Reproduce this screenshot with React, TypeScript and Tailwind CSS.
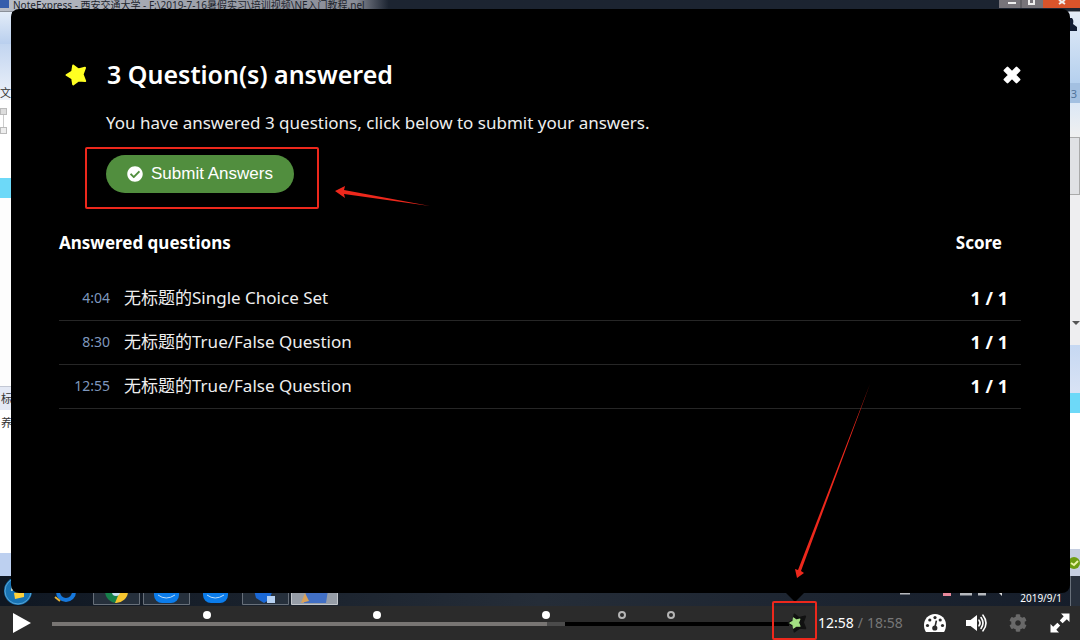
import { FaCheckCircle, FaCog } from 'react-icons/fa';

const DURATION = 1138;

const answers = [
  { time: '4:04', title: '无标题的Single Choice Set', score: '1 / 1' },
  { time: '8:30', title: '无标题的True/False Question', score: '1 / 1' },
  { time: '12:55', title: '无标题的True/False Question', score: '1 / 1' },
];

const markers = [
  { seconds: 244, answered: true },
  { seconds: 510, answered: true },
  { seconds: 775, answered: true },
  { seconds: 894, answered: false },
  { seconds: 972, answered: false },
];

function StarIcon({ className }: { className?: string }) {
  return (
    <svg viewBox="0 0 22 22" className={className} aria-hidden="true">
      <path
        d="M1.5 11 L7.2 7.6 L8.2 1.5 L13.2 5.4 L20 3.8 L17.6 10.4 L20.2 17 L13.6 16.4 L8.2 20.5 L7.2 14.4 Z"
        fill="currentColor"
        stroke="currentColor"
        strokeWidth="2"
        strokeLinejoin="round"
      />
    </svg>
  );
}

function GaugeIcon() {
  return (
    <svg viewBox="0 0 24 20" className="h-5 w-6" aria-hidden="true">
      <path fill="#fff" d="M12 1 C5.4 1 1 6 1 12 C1 14.6 1.6 16.6 2.6 18.4 Q3 19 3.8 19 H20.2 Q21 19 21.4 18.4 C22.4 16.6 23 14.6 23 12 C23 6 18.6 1 12 1 Z" />
      <g fill="#2b2b2b">
        <circle cx="4.5" cy="12.5" r="1.6" />
        <circle cx="6.8" cy="7" r="1.6" />
        <circle cx="12" cy="4.6" r="1.6" />
        <circle cx="17.2" cy="7" r="1.6" />
        <circle cx="19.5" cy="12.5" r="1.6" />
        <circle cx="11.8" cy="15" r="2.6" />
      </g>
      <path d="M12 14 L13.4 7.6" stroke="#2b2b2b" strokeWidth="1.6" />
    </svg>
  );
}

function VolumeIcon() {
  return (
    <svg viewBox="0 0 22 18" className="h-[18px] w-[22px]" aria-hidden="true">
      <path fill="#fff" d="M0 6 H4.5 L11 1 V17 L4.5 12 H0 Z" />
      <g fill="none" stroke="#fff" strokeWidth="1.6" strokeLinecap="round">
        <path d="M13 6.2 Q15.2 9 13 11.8" />
        <path d="M15 3.6 Q19 9 15 14.4" />
        <path d="M17 1.2 Q23 9 17 16.8" />
      </g>
    </svg>
  );
}

function ExpandIcon() {
  return (
    <svg viewBox="0 0 20 20" className="size-5" aria-hidden="true">
      <path fill="#fff" d="M11 0.5 H19.5 V9 L16.8 6.3 L12.6 10.2 L9.8 7.4 L13.7 3.2 Z" />
      <path fill="#fff" d="M9 19.5 H0.5 V11 L3.2 13.7 L7.4 9.8 L10.2 12.6 L6.3 16.8 Z" />
    </svg>
  );
}

// The recorded desktop that shows around the edges of the dialog
function Desktop() {
  return (
    <div className="flex h-full flex-col overflow-hidden text-[#333]" aria-hidden="true">
      <div className="flex h-3 justify-between border-b border-[#8a8f98] bg-linear-to-r from-[#b9bdc6] from-0% via-[#898c96] via-33% to-[#1c2431] to-36%">
        <div className="flex items-start gap-1 whitespace-nowrap text-[10px] leading-none text-[#20242c]">
          <span className="h-2 w-[9px] bg-[#355dac]" />
          <span>NoteExpress - 西安交通大学 - F:\2019-7-16暑假实习\培训视频\NE入门教程.nel</span>
        </div>
        <svg viewBox="0 0 81 9" className="h-[9px] w-[81px]">
          <rect width="44" height="8" fill="#77747a" />
          <rect x="44" width="37" height="8" fill="#d9542b" />
          <path d="M22 0 V8" stroke="#4b4a50" />
          <path d="M9 3 H17 M30 0 V4 H35 V0" stroke="#eee" strokeWidth="2" fill="none" />
          <path d="M60 0 L66 4 M66 0 L60 4" stroke="#eee" strokeWidth="2" />
        </svg>
      </div>
      <div className="flex flex-1 justify-between bg-black text-[11px] leading-none">
        <div className="flex w-3 flex-col overflow-hidden bg-white">
          <div className="h-8 bg-linear-to-b from-[#e3ecf8] to-[#b9cfee]" />
          <div className="flex h-14 items-end bg-linear-to-b from-[#c2d5f0] to-[#eff3fa]">
            <span className="pb-0.5">文</span>
          </div>
          <div className="flex h-[78px] flex-col items-start pt-2">
            <span className="size-[7px] border border-[#bbb] bg-[#ddd]" />
            <span className="ml-[3px] h-3 w-px bg-[#ccc]" />
            <span className="size-[7px] border border-[#bbb] bg-[#eee]" />
          </div>
          <div className="h-5 bg-[#6dd9f8]" />
          <div className="h-[188px] bg-[#fdfdfd]" />
          <div className="flex h-6 items-center border-t border-[#c3c8d4] bg-[#e4e9f5] pl-px">标</div>
          <div className="flex h-6 items-center pl-px">养</div>
          <div className="flex-1" />
          <div className="h-[23px] bg-[#bdd0f0]" />
        </div>
        <div className="flex w-3 flex-col overflow-hidden bg-white">
          <div className="h-[71px] bg-linear-to-b from-[#e3ecf8] to-[#b5d0ee]">
            <svg viewBox="0 0 12 20" className="mt-0.5 h-5 w-3">
              <path fill="#101b33" d="M1 4 H4 Q6 6 5 10 L9 13 V17 H0 V4 Z" />
            </svg>
          </div>
          <div className="flex h-5 items-center justify-center bg-[#a3c0e1] text-[#52749c]">3</div>
          <div className="h-[34px] bg-linear-to-b from-[#dce8f6] to-[#f0f0f0]" />
          <div className="h-[58px] border border-[#aaa] bg-[#e0e1e4]" />
          <div className="flex h-[150px] items-end bg-[#eeeef0] pb-5">
            <span className="ml-1 border-4 border-b-0 border-transparent border-t-[#555]" />
          </div>
          <div className="h-12 bg-linear-to-b from-[#c6d8f2] to-[#d9e3f5]" />
          <div className="h-5 bg-[#6dd9f8]" />
          <div className="flex-1" />
          <div className="h-[27px] bg-[#c5cee0] pt-2">
            <svg viewBox="0 0 12 12" className="size-3">
              <circle cx="6" cy="6" r="6" fill="#6d9d12" />
              <path d="M3 6 L6 8 L10 4" stroke="#e8f3a5" strokeWidth="2" fill="none" />
            </svg>
          </div>
        </div>
      </div>
      <div className="flex h-[30px] items-end justify-between bg-linear-to-r from-[#0f1722] via-[#252d38] to-[#151d2a]">
        <svg viewBox="0 0 340 30" className="h-[30px] w-[340px]">
          <circle cx="18" cy="15" r="14" fill="#1873b4" />
          <circle cx="18" cy="15" r="13" fill="none" stroke="#58a5d4" />
          <path d="M14 17 L24 15 V21 L15 23 Z" fill="#ffd13b" />
          <path d="M12 8 L18 6 V13 L11 15 Z" fill="#e9f0d4" />
          <circle cx="66" cy="16" r="8" fill="none" stroke="#1678dc" strokeWidth="4" />
          <path d="M55 21 L60 25" stroke="#e7b337" strokeWidth="2" />
          <g fill="#26303c" stroke="#68707a">
            <path d="M93.5 0 H139.5 V28.5 H93.5 Z" />
            <path d="M143.5 0 H189.5 V28.5 H143.5 Z" />
            <path d="M242.5 0 H288.5 V28.5 H242.5 Z" />
          </g>
          <path d="M291.5 0 H337.5 V28.5 H291.5 Z" fill="#969da7" stroke="#c2c6cb" />
          <path d="M105 15 A12 12 0 0 0 117 27 L120 15 Z" fill="#16804a" />
          <path d="M128 15 A12 12 0 0 1 115 27 L120 15 Z" fill="#f5c52f" />
          <circle cx="116" cy="16" r="4" fill="#c5ddf0" />
          <rect x="154" y="8" width="25" height="19" rx="8" fill="#0b7ceb" />
          <rect x="203" y="8" width="25" height="19" rx="8" fill="#0b7ceb" />
          <path d="M158 19 Q166 25 175 19 M207 19 Q215 25 224 19" stroke="#b8dbfa" fill="none" />
          <path d="M254 14 H273 L269 24 L264 27 L256 22 Z" fill="#1a68d6" />
          <path d="M267 20 H275 V27 H267 Z" fill="#b6d1f2" />
          <path d="M306 14 H328 L326 27 H304 Z" fill="#416fc4" />
          <path d="M301 27 L305 17 L309 25 Z" fill="#d9a159" />
        </svg>
        <div className="flex h-full items-end text-[10px] leading-none text-white">
          <svg viewBox="0 0 108 6" className="mb-2 h-1.5 w-[108px]">
            <path d="M0 1 H10 M60 2 H72 M78 2 H86" stroke="#b5b8bd" strokeWidth="3" />
            <path d="M43 2 H51" stroke="#e8899b" strokeWidth="4" />
            <path d="M98 0 L102 4 V0" fill="#ddd" />
          </svg>
          <span className="mr-2 mb-[3px] ml-3">2019/9/1</span>
          <span className="h-full w-2.5 border-l border-[#68707a] bg-[#28303c]" />
        </div>
      </div>
    </div>
  );
}

function SubmitScreen() {
  return (
    <section
      role="dialog"
      aria-labelledby="submit-title"
      className="absolute top-[9px] right-2.5 bottom-[13px] left-[11px] rounded-lg bg-black pt-12 pr-[49px] pl-12 text-[#eee]"
    >
      <header className="flex h-9 items-center">
        <StarIcon className="mx-1.5 size-[22px] text-[#ffff22]" />
        <h1 id="submit-title" className="ml-3.5 flex-1 text-[25px] font-semibold text-white">
          3 Question(s) answered
        </h1>
        <button type="button" aria-label="Close" className="flex size-[18px] items-center justify-center">
          <svg viewBox="1 1 16 16" className="size-[18px]" aria-hidden="true">
            <path
              d="M5 2.5 L9 6.5 L13 2.5 L15.5 5 L11.5 9 L15.5 13 L13 15.5 L9 11.5 L5 15.5 L2.5 13 L6.5 9 L2.5 5 Z"
              fill="#fff"
              stroke="#fff"
              strokeWidth="2"
              strokeLinejoin="round"
            />
          </svg>
        </button>
      </header>
      <div className="pt-4 pl-[47px]">
        <p className="text-[17px] leading-7">You have answered 3 questions, click below to submit your answers.</p>
        <div className="relative mt-[18px] inline-block">
          <button
            type="button"
            className="flex h-[38px] items-center gap-2 rounded-full bg-[#518e3e] px-[21px] font-[Liberation_Sans] text-[17px] text-white"
          >
            <FaCheckCircle className="size-4" />
            Submit Answers
          </button>
          <span className="pointer-events-none absolute -top-2 -right-[25px] -bottom-4 -left-[21px] rounded-xs border-2 border-[#ed281c]" />
        </div>
      </div>
      <table className="mt-9 w-full border-collapse">
        <thead>
          <tr className="h-[47px] align-top text-[17px] leading-7 text-white">
            <th colSpan={2} className="text-left font-bold">Answered questions</th>
            <th className="w-24 pr-[19px] text-right font-bold">Score</th>
          </tr>
        </thead>
        <tbody>
          {answers.map((answer) => (
            <tr key={answer.time} className="h-11 border-b border-[#262626]">
              <td className="w-[51px] text-right text-sm text-[#7e97bd]">{answer.time}</td>
              <td className="pl-3.5 text-[17px]">{answer.title}</td>
              <td className="pr-[13px] text-right text-lg font-bold text-white">{answer.score}</td>
            </tr>
          ))}
        </tbody>
      </table>
      {/* pointer towards the star button */}
      <span className="absolute top-full right-[266px] border-[9px] border-b-0 border-transparent border-t-black" />
    </section>
  );
}

function Controls() {
  return (
    <div className="flex h-[34px] items-center bg-[#2b2b2b] text-white">
      <button type="button" aria-label="Play" className="flex w-[52px] items-center pl-[13px]">
        <svg viewBox="0 0 18 20" className="h-5 w-[18px]" aria-hidden="true">
          <path d="M0 0 L18 10 L0 20 Z" fill="#fff" />
        </svg>
      </button>
      <div className="relative h-full flex-1">
        <div className="absolute top-4 -right-3 left-0 flex h-1 bg-black">
          <div className="w-[67.2%] bg-[#787573]" />
          <div className="w-[2.4%] bg-[#4b4b4b]" />
        </div>
        {markers.map((marker) => (
          <button
            key={marker.seconds}
            type="button"
            aria-label="Interaction"
            className={
              marker.answered
                ? 'absolute top-[5px] -ml-1 size-2 rounded-full bg-white'
                : 'absolute top-[5px] -ml-1 size-2 rounded-full border-2 border-[#b5b5b5]'
            }
            style={{ left: `${(marker.seconds / DURATION) * 100}%` }}
          />
        ))}
      </div>
      <button type="button" aria-label="Submit answers" className="relative flex h-full w-10 items-center justify-center">
        <StarIcon className="size-5 text-[#111]" />
        <StarIcon className="absolute left-3 size-3 text-[#a4e083]" />
        <span className="pointer-events-none absolute -top-[5px] right-0 bottom-0 -left-[5px] rounded-xs border-2 border-[#ed281c]" />
      </button>
      <div className="flex w-[106px] gap-1 pl-px text-sm whitespace-nowrap">
        <span>12:58</span>
        <span className="text-[#777]">/</span>
        <span className="text-[#777]">18:58</span>
      </div>
      <button type="button" aria-label="Playback rate"><GaugeIcon /></button>
      <button type="button" aria-label="Mute" className="ml-[19px]"><VolumeIcon /></button>
      <button type="button" aria-label="Quality" className="ml-[21px] text-[#696969]"><FaCog className="size-[18px]" /></button>
      <button type="button" aria-label="Fullscreen" className="mr-2.5 ml-[23px]"><ExpandIcon /></button>
    </div>
  );
}

export default function App() {
  return (
    <main className="relative flex h-screen min-h-[480px] flex-col overflow-hidden bg-black font-['Noto_Sans','Noto_Sans_CJK_SC',sans-serif]">
      <div className="relative min-h-0 flex-1">
        <Desktop />
        <SubmitScreen />
      </div>
      <Controls />
      <svg viewBox="0 0 96 20" className="pointer-events-none absolute top-[186px] left-[335px] h-5 w-24" aria-hidden="true">
        <path d="M0 5 L10 0 L9 4 L95 20 L9 8 L10 12 Z" fill="#ed281c" />
      </svg>
      <svg viewBox="0 0 76 194" className="pointer-events-none absolute right-[209px] bottom-[62px] h-[194px] w-[76px]" aria-hidden="true">
        <path d="M2 194 L0 185 L3 186 L75 0 L6 187 L9 189 Z" fill="#ed281c" />
      </svg>
    </main>
  );
}
